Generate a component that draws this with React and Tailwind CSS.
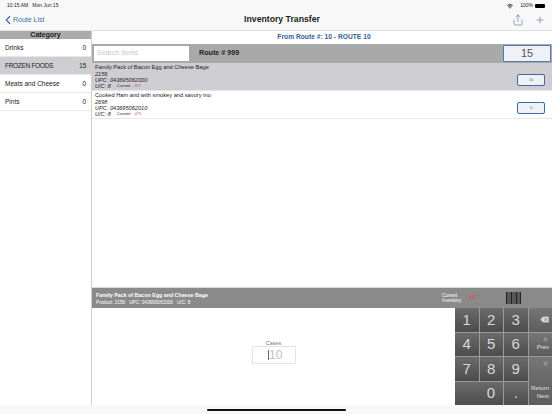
import React from 'react';
import { ChevronLeft, Plus, Share, Delete, ChevronsUp, ChevronsDown, Wifi } from 'lucide-react';

const categories = [
  { name: 'Drinks', count: 0 },
  { name: 'FROZEN FOODS', count: 15, active: true },
  { name: 'Meats and Cheese', count: 0 },
  { name: 'Pints', count: 0 },
];

const items = [
  { name: 'Family Pack of Bacon Egg and Cheese Bage', id: '2156', upc: '043695062000', current: '-897', qty: 10, active: true },
  { name: 'Cooked Ham and with smokey and savory mo', id: '2698', upc: '043695062010', current: '-475', qty: 5 },
];

const Key = ({ children, className = '' }) => (
  <div className={`flex items-center justify-center bg-gradient-to-b from-[#6b6b6b] to-[#4c4c4c] text-[15px] text-[#d8d8d8] ${className}`}>
    {children}
  </div>
);

const SideKey = ({ children, className = '' }) => (
  <div className={`flex flex-col bg-gradient-to-b from-[#767676] to-[#5c5c5c] text-[6px] leading-[8px] text-[#e0e0e0] ${className}`}>
    {children}
  </div>
);

const Barcode = () => (
  <svg width="15" height="12" viewBox="0 0 15 12">
    <path d="M0 0h1.5v12H0zM2.5 0h1v12h-1zM4.5 0h2v12h-2zM7.5 0h1v12h-1zM9.5 0h2v12h-2zM12.5 0h1v12h-1zM14 0h1v12h-1z" fill="#222" />
  </svg>
);

export default function App() {
  return (
    <div className="flex h-[414px] w-[552px] flex-col overflow-hidden bg-white font-['Liberation_Sans',sans-serif] text-[#222]">
      {/* Status + nav */}
      <div className="h-[31px] shrink-0 border-b border-[#e2e2e2] bg-[#f8f8f8]">
        <div className="flex h-[10px] items-center justify-between pl-[7px] pr-[7px] pt-[1px] text-[5px]">
          <span>10:15 AM &nbsp; Mon Jun 15</span>
          <div className="flex items-center gap-[2px]">
            <Wifi size={6} strokeWidth={3} />
            <span className="ml-[5px]">100%</span>
            <div className="h-[4px] w-[10px] rounded-[1px] bg-black" />
          </div>
        </div>
        <div className="flex h-[20px] items-center justify-between pl-[1px] pr-[7px]">
          <div className="flex w-[118px] items-center text-[7px] text-[#3f6ea8]">
            <ChevronLeft size={14} strokeWidth={2} className="-mr-[2px]" />
            <span>Route List</span>
          </div>
          <span className="text-[8.7px] font-bold">Inventory Transfer</span>
          <div className="flex w-[100px] items-center justify-end gap-[11px] text-[#4a76ac]">
            <Share size={12} strokeWidth={1.25} />
            <Plus size={10} strokeWidth={1.5} />
          </div>
        </div>
      </div>

      <div className="flex min-h-0 flex-1">
        {/* Category list */}
        <div className="w-[92px] shrink-0 border-r border-[#cfcfcf]">
          <div className="h-[8px] bg-[#ababab] text-center text-[7px] font-bold leading-[8px]">Category</div>
          {categories.map((c) => (
            <div
              key={c.name}
              className={`flex h-[18px] items-center justify-between border-b border-[#e8e8e8] pl-[5px] pr-[5px] text-[6.5px] ${c.active ? 'bg-[#cdcdd2] tracking-[-0.3px]' : 'bg-white'}`}
            >
              <span>{c.name}</span>
              <span>{c.count}</span>
            </div>
          ))}
        </div>

        <div className="flex min-w-0 flex-1 flex-col">
          <div className="flex h-[13px] shrink-0 items-center justify-center pl-[4px] text-[6.7px] font-bold text-[#2f5f97]">
            From Route #: 10 - ROUTE 10
          </div>

          <div className="flex h-[19px] shrink-0 items-center bg-[#a9a9a9] pl-[2px] pr-[1px]">
            <div className="flex h-[15px] w-[95px] items-center bg-white pl-[3px] text-[7px] text-[#c8c8c8]">Search Items</div>
            <span className="ml-[10px] text-[7.2px] font-bold">Route # 999</span>
            <div className="ml-auto flex h-[17px] w-[48px] items-center justify-center rounded-[1px] border border-[#4f7cab] bg-[#eef2f7] text-[11px] text-[#555]">
              15
            </div>
          </div>

          {items.map((it) => (
            <div
              key={it.id}
              className={`flex h-[28px] shrink-0 items-center justify-between border-b border-[#e8e8e8] pl-[3px] pr-[7px] ${it.active ? 'bg-[#cdcdd2]' : 'bg-white'}`}
            >
              <div className="text-[5.6px] leading-[6px]">
                <div className="mb-[1px] text-[5.7px] leading-[6px]">{it.name}</div>
                <div className="italic">{it.id}</div>
                <div className="italic">UPC: {it.upc}</div>
                <div className="flex gap-[6px]">
                  <span className="italic">U/C: 8</span>
                  <span className="text-[4px]">
                    Current: <span className="ml-[1px] text-[#e0506a]">{it.current}</span>
                  </span>
                </div>
              </div>
              <div className="mt-[7px] flex h-[12px] w-[28px] items-center justify-center rounded-[2px] border-[1.5px] border-[#3d6c9c] bg-[#eef2f7] text-[4px] text-[#555]">
                {it.qty}
              </div>
            </div>
          ))}

          <div className="flex-1" />

          {/* Selected product */}
          <div className="flex h-[21px] shrink-0 items-center justify-between border-t border-[#d8d8d8] bg-[#8a8a8a] pl-[4px] pr-[31px] text-white">
            <div>
              <div className="text-[5.3px] font-bold leading-[7px]">Family Pack of Bacon Egg and Cheese Bage</div>
              <div className="mt-[1px] flex gap-[4px] text-[4.7px] leading-[5px]">
                <span>Product: 2156</span>
                <span>UPC: 043695062000</span>
                <span>U/C: 8</span>
              </div>
            </div>
            <div className="flex items-center">
              <div className="text-[4.6px] leading-[5px]">
                Current
                <br />
                Inventory
              </div>
              <span className="ml-[6px] mr-[29px] text-[5px] text-[#e03b4c]">-897</span>
              <Barcode />
            </div>
          </div>

          <div className="flex h-[97px] shrink-0">
            <div className="flex flex-1 flex-col items-center pt-[32px]">
              <div className="text-[5.5px] leading-[6px] text-[#777]">Cases</div>
              <div className="flex h-[18px] w-[44px] items-center rounded-[1px] border border-[#e4e4e4] pl-[15px] text-[12px] text-[#c2c2c2]">
                <span className="mr-[0.5px] h-[10px] w-[1px] bg-[#3f6ea8]" />
                10
              </div>
            </div>

            {/* Keypad */}
            <div className="grid w-[97px] shrink-0 grid-cols-4 grid-rows-4 gap-[1px] bg-[#9a9a9a]">
              <Key>1</Key>
              <Key>2</Key>
              <Key>3</Key>
              <SideKey className="items-center justify-center">
                <Delete size={11} fill="#d8d8d8" stroke="#555" strokeWidth={1} className="ml-[8px]" />
              </SideKey>
              <Key>4</Key>
              <Key>5</Key>
              <Key>6</Key>
              <SideKey className="items-end pr-[3px] pt-[3px]">
                <ChevronsUp size={7} />
                <span>Prev</span>
              </SideKey>
              <Key>7</Key>
              <Key>8</Key>
              <Key>9</Key>
              <SideKey className="row-span-2 items-end justify-between pb-[5px] pr-[3px] pt-[3px]">
                <ChevronsDown size={7} />
                <div className="text-right">
                  Return
                  <br />
                  Next
                </div>
              </SideKey>
              <Key className="col-span-2 pl-[24px]">0</Key>
              <Key>.</Key>
            </div>
          </div>
        </div>
      </div>

      {/* Home indicator */}
      <div className="flex h-[9px] shrink-0 items-center justify-center bg-[#f8f8f8]">
        <div className="h-[2px] w-[139px] rounded-full bg-[#111]" />
      </div>
    </div>
  );
}
